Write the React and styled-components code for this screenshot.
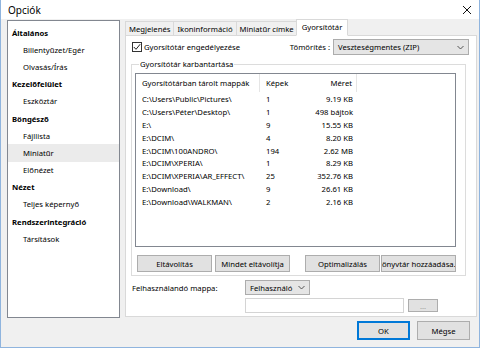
import React from 'react';
import styled, { createGlobalStyle } from 'styled-components';

const GlobalStyle = createGlobalStyle`
  html, body { margin: 0; padding: 0; background: #ffffff; }
  body { font-family: "Noto Sans", "Open Sans", sans-serif; font-size: 7.7px; color: #000; }
  * { box-sizing: border-box; }
`;

const Window = styled.div`
  width: 480px;
  height: 348px;
  display: flex;
  flex-direction: column;
  background: #f0f0f0;
  border: 1px solid #8fb4de;
  border-top: none;
`;

const TitleBar = styled.div`
  height: 19px;
  background: #ffffff;
  display: flex;
  align-items: center;
  justify-content: space-between;
  padding: 0 7px 0 7px;
  font-size: 10px;
`;

const Main = styled.div`
  display: flex;
  gap: 5px;
  padding: 1px 2px 0 6px;
  height: 299px;
`;

const Tree = styled.div`
  width: 113px;
  height: 298px;
  background: #ffffff;
  border: 1px solid #828790;
  padding-top: 3px;
`;

const TreeRow = styled.div`
  height: 17.2px;
  display: flex;
  align-items: center;
  padding-left: ${p => (p.$child ? 15 : 4)}px;
  font-weight: ${p => (p.$child ? 400 : 700)};
  background: ${p => (p.$selected ? '#ebebeb' : 'transparent')};
  white-space: nowrap;
`;

const Right = styled.div`
  width: 352px;
  display: flex;
  flex-direction: column;
`;

const TabStrip = styled.div`
  display: flex;
  align-items: flex-end;
  height: 16px;
  margin-bottom: -1px;
  position: relative;
  z-index: 1;
`;

const Tab = styled.div`
  height: ${p => (p.$active ? 17 : 15)}px;
  padding: 0 ${p => (p.$active ? 5 : 3)}px;
  margin-left: ${p => (p.$active ? -2 : 0)}px;
  display: flex;
  align-items: center;
  border: 1px solid #d9d9d9;
  border-left: ${p => (p.$first || p.$active ? '1px solid #d9d9d9' : 'none')};
  border-bottom: ${p => (p.$active ? '1px solid #ffffff' : '1px solid #d9d9d9')};
  background: ${p => (p.$active ? '#ffffff' : '#f0f0f0')};
  white-space: nowrap;
  padding-bottom: ${p => (p.$active ? 2 : 0)}px;
`;

const Panel = styled.div`
  height: 282px;
  background: #ffffff;
  border: 1px solid #d9d9d9;
  padding: 3px 7px 0 5px;
  display: flex;
  flex-direction: column;
`;

const TopRow = styled.div`
  display: flex;
  align-items: center;
  justify-content: space-between;
  height: 16px;
`;

const CheckLabel = styled.label`
  display: flex;
  align-items: center;
  gap: 2px;
  padding-left: 1px;
`;

const CheckBox = styled.span`
  width: 10px;
  height: 10px;
  border: 1px solid #333333;
  background: #ffffff;
  display: flex;
  align-items: center;
  justify-content: center;
`;

const Field = styled.div`
  display: flex;
  align-items: center;
  gap: 3px;
`;

const Select = styled.div`
  width: ${p => p.$w}px;
  height: ${p => p.$h || 16}px;
  background: #e5e5e5;
  border: 1px solid #acacac;
  display: flex;
  align-items: center;
  justify-content: space-between;
  padding: 0 4px 0 4px;
`;

const Group = styled.fieldset`
  margin: 4px 3px 0 0;
  padding: 2px 9px 3px 3px;
  border: 1px solid #dcdcdc;
  min-width: 0;
`;

const Legend = styled.legend`
  padding: 0 1px;
  margin-left: 4px;
  line-height: 10px;
`;

const List = styled.div`
  height: 174px;
  margin-top: 2px;
  border: 1px solid #828790;
  background: #ffffff;
`;

const ListRow = styled.div`
  display: grid;
  grid-template-columns: 124px 40px 57px 1fr;
  height: ${p => (p.$head ? 18 : 12.9)}px;
  align-items: center;
  margin-bottom: ${p => (p.$head ? 0.5 : 0)}px;
`;

const Cell = styled.div`
  height: 100%;
  display: flex;
  align-items: center;
  justify-content: ${p => (p.$right ? 'flex-end' : 'flex-start')};
  padding: ${p => (p.$right ? '0 4px 0 0' : '0 0 0 6px')};
  border-right: ${p => (p.$head && p.$sep ? '1px solid #e5e5e5' : 'none')};
  white-space: nowrap;
  overflow: hidden;
`;

const ButtonRow = styled.div`
  display: flex;
  justify-content: space-between;
  margin-top: 8px;
  padding-left: 2px;
`;

const ButtonGroup = styled.div`
  display: flex;
  gap: ${p => p.$gap}px;
`;

const Button = styled.div`
  width: ${p => p.$w || 75}px;
  height: ${p => p.$h || 17}px;
  background: #e1e1e1;
  border: ${p => (p.$default ? '1px solid #0078d7' : '1px solid #adadad')};
  box-shadow: ${p => (p.$default ? 'inset 0 0 0 1px #0078d7' : 'none')};
  color: ${p => (p.$disabled ? '#a0a0a0' : '#000')};
  display: flex;
  align-items: center;
  justify-content: center;
  white-space: nowrap;
  overflow: hidden;
`;

const FolderRow = styled.div`
  display: flex;
  align-items: center;
  margin-top: 4px;
  padding-left: 1px;
`;

const FolderLabel = styled.span`
  width: 113px;
`;

const PathRow = styled.div`
  display: flex;
  align-items: center;
  gap: 4px;
  margin-top: 3px;
  padding-left: 114px;
`;

const Input = styled.div`
  width: 159px;
  height: 15px;
  border: 1px solid #d4d4d4;
  background: #ffffff;
`;

const Footer = styled.div`
  display: flex;
  justify-content: flex-end;
  gap: 7px;
  padding: 3px 9px 0 0;
`;

const Chevron = () => (
  <svg width="7" height="5" viewBox="0 0 7 5">
    <path d="M0.5 1 L3.5 4 L6.5 1" fill="none" stroke="#444" strokeWidth="0.9" />
  </svg>
);

const tree = [
  ['Általános', false],
  ['Billentyűzet/Egér', true],
  ['Olvasás/Írás', true],
  ['Kezelőfelület', false],
  ['Eszköztár', true],
  ['Böngésző', false],
  ['Fájllista', true],
  ['Miniatűr', true, true],
  ['Előnézet', true],
  ['Nézet', false],
  ['Teljes képernyő', true],
  ['Rendszerintegráció', false],
  ['Társítások', true],
];

const folders = [
  ['C:\\Users\\Public\\Pictures\\', '1', '9.19 KB'],
  ['C:\\Users\\Péter\\Desktop\\', '1', '498 bájtok'],
  ['E:\\', '9', '15.55 KB'],
  ['E:\\DCIM\\', '4', '8.20 KB'],
  ['E:\\DCIM\\100ANDRO\\', '194', '2.62 MB'],
  ['E:\\DCIM\\XPERIA\\', '1', '8.29 KB'],
  ['E:\\DCIM\\XPERIA\\AR_EFFECT\\', '25', '352.76 KB'],
  ['E:\\Download\\', '9', '26.61 KB'],
  ['E:\\Download\\WALKMAN\\', '2', '2.16 KB'],
];

const tabs = ['Megjelenés', 'Ikoninformáció', 'Miniatűr címke', 'Gyorsítótár'];

const App = () => {
  return (
    <>
      <GlobalStyle />
      <Window>
        <TitleBar>
          <span>Opciók</span>
          <svg width="10" height="10" viewBox="0 0 10 10">
            <path d="M1 1 L9 9 M9 1 L1 9" stroke="#111" strokeWidth="1" />
          </svg>
        </TitleBar>
        <Main>
          <Tree>
            {tree.map(([label, child, selected]) => (
              <TreeRow key={label} $child={child} $selected={selected}>{label}</TreeRow>
            ))}
          </Tree>
          <Right>
            <TabStrip>
              {tabs.map((t, i) => (
                <Tab key={t} $first={i === 0} $active={i === 3}>{t}</Tab>
              ))}
            </TabStrip>
            <Panel>
              <TopRow>
                <CheckLabel>
                  <CheckBox>
                    <svg width="8" height="8" viewBox="0 0 8 8">
                      <path d="M0.8 4 L3 6.3 L7.2 1.2" fill="none" stroke="#222" strokeWidth="1" />
                    </svg>
                  </CheckBox>
                  Gyorsítótár engedélyezése
                </CheckLabel>
                <Field>
                  <span>Tömörítés :</span>
                  <Select $w={136}>
                    <span>Veszteségmentes (ZIP)</span>
                    <Chevron />
                  </Select>
                </Field>
              </TopRow>
              <Group>
                <Legend>Gyorsítótár karbantartása</Legend>
                <List>
                  <ListRow $head>
                    <Cell $head $sep>Gyorsítótárban tárolt mappák</Cell>
                    <Cell $head>Képek</Cell>
                    <Cell $head $sep $right>Méret</Cell>
                    <Cell />
                  </ListRow>
                  {folders.map(([path, count, size]) => (
                    <ListRow key={path}>
                      <Cell>{path}</Cell>
                      <Cell>{count}</Cell>
                      <Cell $right>{size}</Cell>
                      <Cell />
                    </ListRow>
                  ))}
                </List>
                <ButtonRow>
                  <ButtonGroup $gap={3}>
                    <Button>Eltávolítás</Button>
                    <Button>Mindet eltávolítja</Button>
                  </ButtonGroup>
                  <ButtonGroup $gap={1}>
                    <Button>Optimalizálás</Button>
                    <Button>Könyvtár hozzáadása...</Button>
                  </ButtonGroup>
                </ButtonRow>
              </Group>
              <FolderRow>
                <FolderLabel>Felhasználandó mappa:</FolderLabel>
                <Select $w={65} $h={15}>
                  <span>Felhasználó</span>
                  <Chevron />
                </Select>
              </FolderRow>
              <PathRow>
                <Input />
                <Button $w={30} $h={13} $disabled>...</Button>
              </PathRow>
            </Panel>
          </Right>
        </Main>
        <Footer>
          <Button $w={53} $h={19} $default>OK</Button>
          <Button $w={53} $h={19}>Mégse</Button>
        </Footer>
      </Window>
    </>
  );
};

export default App;
